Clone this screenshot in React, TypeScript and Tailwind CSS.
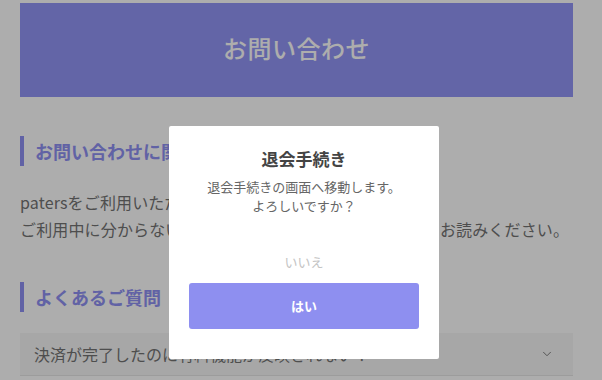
import React from 'react';
import { ChevronDown } from 'lucide-react';

const font = { fontFamily: '"Noto Sans CJK JP", "Noto Sans", sans-serif' };

const SectionTitle: React.FC<{ children: React.ReactNode }> = ({ children }) => (
  <div className="flex items-center gap-[11px] h-[30px]">
    <span className="w-[4px] h-[30px] bg-[#8f91f3]" />
    <h2 className="text-[18px] font-bold text-[#8f91f3] leading-none">{children}</h2>
  </div>
);

const App: React.FC = () => {
  return (
    <div className="relative w-[602px] h-[380px] overflow-hidden bg-white" style={font}>
      <div className="pl-[20px] pr-[29px] pt-[3px]">
        <div className="h-[94px] bg-[#9396f6] flex items-center justify-center">
          <h1 className="text-[24px] font-medium text-white tracking-[0.5px] -translate-y-[2px]">お問い合わせ</h1>
        </div>

        <div className="mt-[39px]">
          <SectionTitle>お問い合わせに関して</SectionTitle>
        </div>

        <div className="mt-[23px] text-[16px] leading-[27px] text-[#737373] tracking-[0.15px] whitespace-nowrap">
          <p>patersをご利用いただき、ありがとうございます。</p>
          <p>ご利用中に分からない点があれば、下記のよくある質問をお読みください。</p>
        </div>

        <div className="mt-[39px]">
          <SectionTitle>よくあるご質問</SectionTitle>
        </div>

        <div className="mt-[21px] h-[43px] bg-[#f7f7f7] border-b border-[#e6e6e6] flex items-center justify-between pl-[14px] pr-[19px]">
          <span className="text-[16px] text-[#737373]">決済が完了したのに有料機能が反映されない？</span>
          <ChevronDown size={14} strokeWidth={1.6} className="text-[#737373]" />
        </div>
      </div>

      <div className="absolute inset-0 bg-black/[0.32]">
        <div className="absolute left-[169px] top-[126px] w-[270px] h-[233px] bg-white rounded-[2px] flex flex-col items-center pt-[21px] px-[20px]">
          <h3 className="text-[17px] font-bold text-[#444] leading-[24px]">退会手続き</h3>
          <p className="mt-[6px] text-[13px] leading-[19px] text-[#666] text-center">
            退会手続きの画面へ移動します。
            <br />
            よろしいですか？
          </p>
          <button className="mt-[38px] text-[13px] leading-[18px] text-[#c4c4c4]">いいえ</button>
          <button className="mt-[12px] w-[230px] h-[46px] rounded-[3px] bg-[#8e8ff0] text-white text-[13px] font-bold">
            はい
          </button>
        </div>
      </div>
    </div>
  );
};

export default App;
